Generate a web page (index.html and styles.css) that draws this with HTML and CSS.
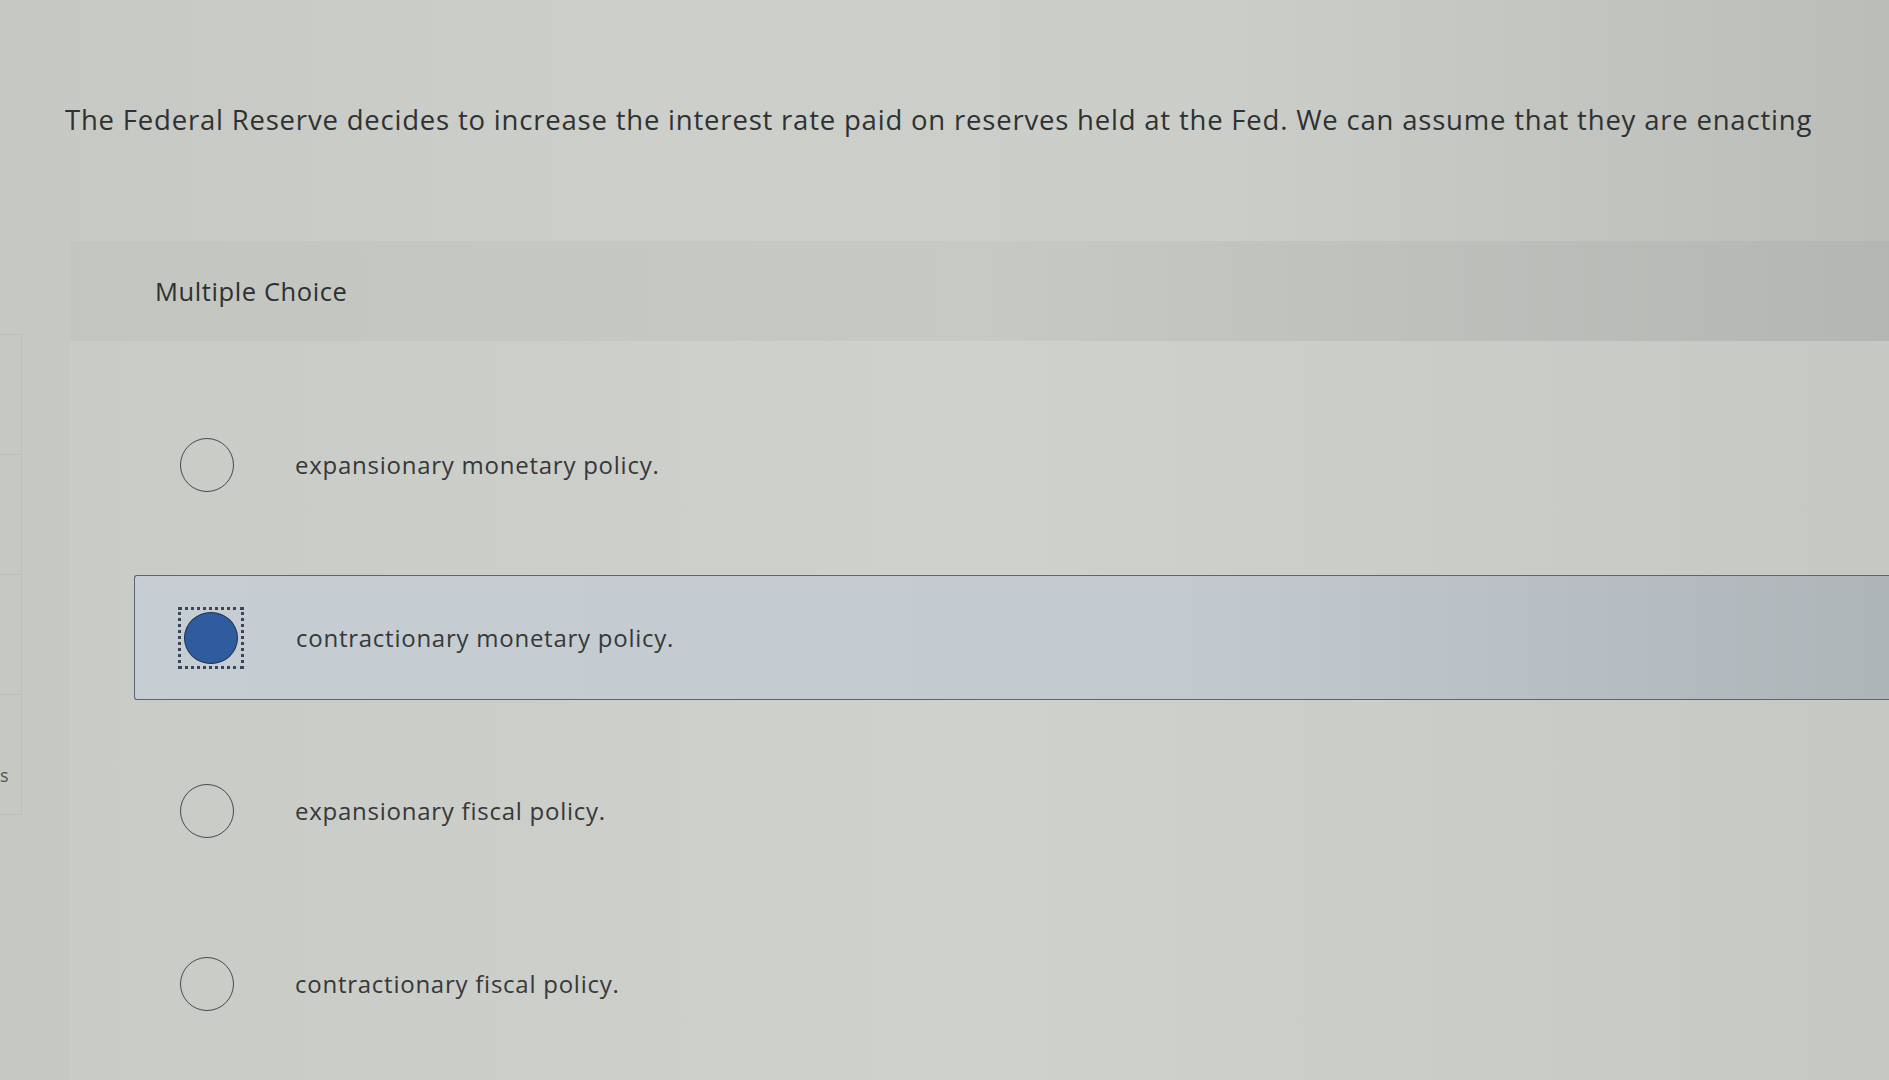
FILE: index.html
```html
<!DOCTYPE html>
<html lang="en">
<head>
<meta charset="utf-8">
<title>Multiple Choice</title>
<link rel="stylesheet" href="styles.css">
</head>
<body>
<div class="page">
  <aside class="side">
    <div class="side-cell"></div>
    <div class="side-cell"></div>
    <div class="side-cell"></div>
    <div class="side-cell side-cell-s"><span class="side-s">s</span></div>
  </aside>
  <main class="content">
    <p class="question">The Federal Reserve decides to increase the interest rate paid on reserves held at the Fed. We can assume that they are enacting</p>
    <section class="panel">
      <div class="panel-head">Multiple Choice</div>
      <div class="options">
        <div class="option">
          <span class="radio"></span>
          <span class="label">expansionary monetary policy.</span>
        </div>
        <div class="option option-selected">
          <span class="focus"><span class="radio radio-on"></span></span>
          <span class="label">contractionary monetary policy.</span>
        </div>
        <div class="option">
          <span class="radio"></span>
          <span class="label">expansionary fiscal policy.</span>
        </div>
        <div class="option">
          <span class="radio"></span>
          <span class="label">contractionary fiscal policy.</span>
        </div>
      </div>
    </section>
  </main>
</div>
</body>
</html>
```
FILE: styles.css
```css
html, body {
  margin: 0;
  padding: 0;
  height: 100%;
  overflow: hidden;
}
body {
  background: linear-gradient(90deg, #c6c8c3 0%, #cdcfca 35%, #cbcdc8 65%, #bbbdb9 100%);
  font-family: "Open Sans", "Lato", sans-serif;
  color: #383a3b;
}
.page {
  display: flex;
  height: 1080px;
}
.side {
  width: 22px;
  flex: none;
  padding-top: 334px;
  display: flex;
  flex-direction: column;
}
.side-cell {
  height: 119px;
  border-top: 1px solid #bdbfba;
  border-right: 1px solid #bdbfba;
}
.side-cell-s {
  position: relative;
  border-bottom: 1px solid #bdbfba;
}
.side-s {
  position: absolute;
  left: 0;
  top: 68px;
  font-size: 18px;
  color: #555;
}
.content {
  flex: 1;
  min-width: 0;
  display: flex;
  flex-direction: column;
}
.question {
  margin: 0;
  padding: 101px 0 0 43px;
  font-size: 27.5px;
  line-height: 38px;
  color: #2f3132;
  white-space: nowrap;
  letter-spacing: 0.8px;
}
.panel {
  margin: 102px 0 0 48px;
  background: linear-gradient(90deg, #c9cbc6 0%, #cfd1cc 50%, #c6c8c4 100%);
  flex: 1;
}
.panel-head {
  height: 100px;
  padding-left: 85px;
  display: flex;
  align-items: center;
  font-size: 25.5px;
  letter-spacing: 0.6px;
  color: #2e3031;
  background: linear-gradient(90deg, #c3c5c0 0%, #c7c9c4 50%, #b4b6b3 100%);
}
.options {
  padding: 61px 0 0 64px;
  display: flex;
  flex-direction: column;
  gap: 48px;
}
.option {
  height: 125px;
  display: flex;
  align-items: center;
  padding-left: 46px;
  box-sizing: border-box;
}
.option-selected {
  background: linear-gradient(90deg, #c6ced3 0%, #c2cacf 60%, #aeb5b9 100%);
  border: 1.5px solid #5b6670;
  border-right: none;
  border-radius: 3px 0 0 3px;
  padding-left: 43px;
}
.radio {
  width: 54px;
  height: 54px;
  border: 1.6px solid #474a4c;
  border-radius: 50%;
  box-sizing: border-box;
  flex: none;
}
.focus {
  width: 66px;
  height: 62px;
  border: 3px dotted #3a4658;
  box-sizing: border-box;
  display: flex;
  align-items: center;
  justify-content: center;
  flex: none;
}
.radio-on {
  width: 54px;
  height: 52px;
  background: #2f5c9f;
  border: 1.5px solid #1f3350;
}
.label {
  margin-left: 61px;
  font-size: 24px;
  color: #363839;
  letter-spacing: 0.75px;
}
.option-selected .label {
  margin-left: 52px;
}
```
